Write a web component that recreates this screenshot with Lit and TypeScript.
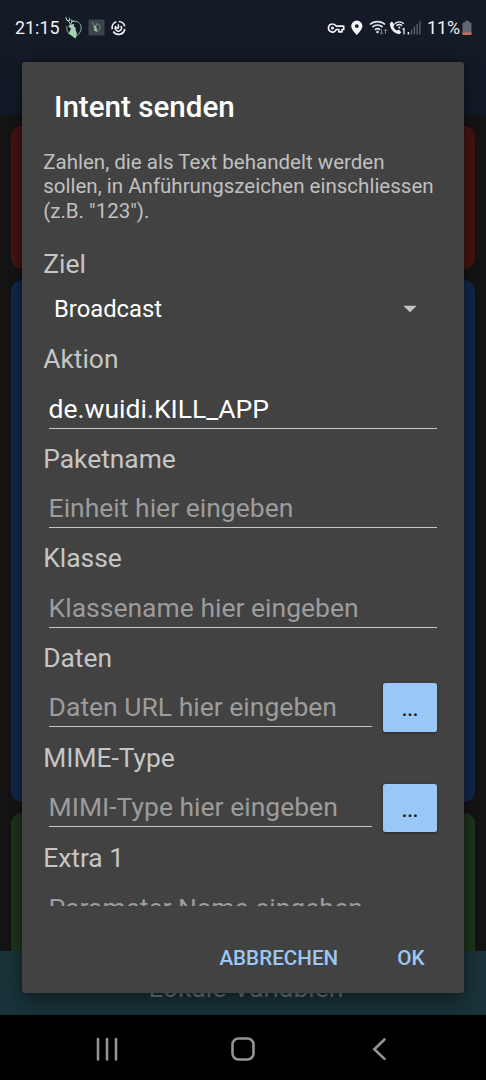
import { LitElement, html, css, nothing } from "lit";
import { customElement, property } from "lit/decorators.js";

@customElement("status-bar")
class StatusBar extends LitElement {
  static styles = css`
    :host {
      display: flex;
      align-items: center;
      height: 55px;
      box-sizing: border-box;
      padding: 0 14px 0 15px;
      color: #f1f2f4;
      font-size: 17.9px;
    }
    .spacer { flex: 1; }
    svg { display: block; flex: none; }
    .clock { width: 50px; white-space: nowrap; line-height: 24px; margin-top: 1px; }
    .app { margin-left: 5px; }
    .sync { margin-left: -1.500px; }
    .key { margin-right: 1px; }
    .battery { width: 35px; white-space: nowrap; line-height: 24px; margin-top: 1px; }
  `;
  render() {
    return html`
      <span class="clock">21:15</span>
      <svg width="18" height="24" viewBox="0 0 18 24">
        <path d="M7.500 5.800C12.500 4 16.200 7.500 16.200 12c0 4-3 6.500-6.200 9.800" fill="none" stroke="#8fb59b" stroke-width="1" />
        <path d="M1.900 10C1.300 13.500 2.600 16 4.200 18" fill="none" stroke="#8fb59b" stroke-width="1" />
        <path d="M.9 1l.8 3 2.300 1.600 1.600 3M1.600 4L4.500 4.800 4.300 1.800M5.600 8.600L6.800 5.700 6 3.400M6.800 5.700L9 4.300" fill="none" stroke="#a5ccb0" stroke-width="1" />
        <path d="M3.600 9.200L7 8.300l2.200-.4-.3 2 2 2.600-.3 1.800 1.500 3.500-1.700 4.800-6.800-5.200 1.900-3.600L6 12.500 3.800 11z" fill="#a8d0b3" />
      </svg>
      <svg class="app" width="17" height="17" viewBox="0 0 17 17">
        <rect x=".5" y=".5" width="16" height="16" rx="1" fill="#3d4447" />
        <path d="M8 5c3-.6 4.500 1.500 4 4-.4 1.700-1.700 2.600-3 4" fill="none" stroke="#7d9d84" stroke-width=".8" />
        <path d="M4.500 3.500l1.300 2.200 1.200 1.500M7.500 7l1-1.500" fill="none" stroke="#8db697" stroke-width=".8" />
        <path d="M5 7.300h3.500l-.3 1.500 1 1.600L8.600 13 6 11.300l.6-2z" fill="#95c2a1" />
      </svg>
      <svg class="sync" width="30" height="16" viewBox="0 0 30 16">
        <g fill="none" stroke="#eef0f3" stroke-width="1.700">
          <path d="M14.800 1.500A6.300 6.300 0 0 1 20.700 6.200M20.800 9A6.300 6.300 0 0 1 9.300 11.500M8.300 9.200A6.300 6.300 0 0 1 12.300 1.800" />
          <path d="M12 6A3.100 3.100 0 1 0 16.800 6M14.400 4.200V8H11.800" stroke-width="1.500" />
        </g>
      </svg>
      <span class="spacer"></span>
      <svg class="key" width="19" height="14" viewBox="0 0 19 14">
        <path d="M5.500 3a4 4 0 1 0 3.700 5.500h2.600v2.300h3.200V8.500h1.700V5.200H9.200A4 4 0 0 0 5.500 3z" fill="none" stroke="#eef0f3" stroke-width="1.700" stroke-linejoin="round" />
        <circle cx="5.500" cy="7" r="1.500" fill="#eef0f3" />
      </svg>
      <svg width="22" height="16" viewBox="0 0 22 16">
        <path fill-rule="evenodd" d="M9.800.500a5.600 5.600 0 0 0-5.600 5.600c0 3.800 5.600 8.900 5.600 8.900s5.600-5.100 5.600-8.900A5.600 5.600 0 0 0 9.800.500zm0 3.700a1.900 1.900 0 1 1 0 3.800 1.900 1.900 0 0 1 0-3.800z" fill="#f3f4f6" />
      </svg>
      <svg width="20" height="16" viewBox="0 0 20 16">
        <g fill="none" stroke="#dfe2e6" stroke-width="1.600">
          <path d="M.9 4.500C5 .6 12 .6 16.100 4.500" /><path d="M3.400 7.200c3-2.800 7.200-2.800 10.200 0" /><path d="M5.900 9.800c1.500-1.300 3.700-1.300 5.200 0" />
        </g>
        <circle cx="8.500" cy="12" r="1.300" fill="#dfe2e6" />
        <path d="M12.500 9v5M11 12.500l1.500 1.700 1.500-1.700M16.500 14V9.200M15 10.800l1.500-1.700 1.500 1.700" fill="none" stroke="#777d87" stroke-width="1" />
      </svg>
      <svg width="18" height="16" viewBox="0 0 18 16">
        <path d="M2.900 1.500L.9 3.200C.6 8.500 5 13.500 10.300 14.300l2-1.800-2.300-3-2.100 1C6 9.500 5 8 4.300 6.500L5.700 4.800z" fill="#eef0f3" />
        <g fill="none" stroke="#eef0f3" stroke-width="1.300">
          <path d="M5.800 3.800c2.600-2.500 6.400-2.500 9 0M7.400 5.800c1.700-1.500 4-1.500 5.700 0" />
        </g>
        <circle cx="10.300" cy="7.500" r="1.100" fill="#eef0f3" />
        <path d="M13.500 9.500l1.500-.9v6" fill="none" stroke="#eef0f3" stroke-width="1.200" />
      </svg>
      <svg width="20" height="16" viewBox="0 0 20 16">
        <path d="M1.400 12v2.500" stroke="#eef0f3" stroke-width="1.600" />
        <path d="M4.600 9.500v5M7.400 6.500v8M10.200 4v10.500M12.900 1.500v13" stroke="#5a606b" stroke-width="1.400" />
      </svg>
      <span class="battery">11%</span>
      <svg width="10" height="16" viewBox="0 0 10 16">
        <path d="M3 .8h4v1.700h1.500q1 0 1 1V14q0 1-1 1h-7q-1 0-1-1V3.500q0-1 1-1H3z" fill="#616872" />
        <path d="M.5 12.600h9V14q0 1-1 1h-7q-1 0-1-1z" fill="#c8705a" />
      </svg>
    `;
  }
}

@customElement("form-field")
class FormField extends LitElement {
  @property() label = "";
  @property() value = "";
  @property() placeholder = "";
  @property({ type: Boolean }) picker = false;

  static styles = css`
    :host { display: block; height: 99.4px; }
    :host([picker]) { height: 100.4px; }
    .label {
      height: 32px;
      line-height: 32px;
      font-size: 26.400px;
      color: #c6c6c6;
    }
    .row { display: flex; align-items: flex-start; padding-left: 5.400px; }
    .input {
      flex: 1;
      box-sizing: border-box;
      height: 43px;
      margin-top: 10.400px;
      line-height: 45px;
      font-size: 26.500px;
      color: #fff;
      white-space: nowrap;
      border-bottom: 1.500px solid #c6c6c6;
    }
    .hint { color: #9c9c9c; }
    .pick {
      width: 54px;
      height: 48.500px;
      margin: 9.600px 0 0 11px;
      border-radius: 2.500px;
      background: #9ac7f6;
      box-shadow: 0 1px 3px #0006;
      color: #111a26;
      font-size: 20px;
      font-weight: 500;
      line-height: 53px;
      text-align: center;
    }
  `;
  render() {
    return html`
      <div class="label">${this.label}</div>
      <div class="row">
        <div class="input ${this.value ? "" : "hint"}">${this.value || this.placeholder}</div>
        ${this.picker ? html`<div class="pick">...</div>` : nothing}
      </div>
    `;
  }
}

@customElement("app-root")
class AppRoot extends LitElement {
  static styles = css`
    :host {
      display: block;
      position: relative;
      height: 1080px;
      overflow: hidden;
      background: #141414;
      font-family: Roboto, "Noto Sans", sans-serif;
    }
    .screen { display: flex; flex-direction: column; height: 1080px; }
    .header { height: 115px; background: linear-gradient(#141a26 45%, #121a2a); }
    .cards { flex: 1; display: flex; flex-direction: column; gap: 11px; padding: 11px 11px 0; overflow: hidden; }
    .card { border-radius: 11px; }
    .red { height: 143px; background: #451411; }
    .blue { height: 522px; background: #11284a; }
    .green { flex: 1; background: #1d351c; border-radius: 11px 11px 0 0; }
    .locals {
      height: 64px;
      background: #19343b;
      color: #6f7b7e;
      font-size: 26.500px;
      line-height: 73px;
      text-align: center;
      padding-left: 6px;
    }
    .nav { display: flex; align-items: center; height: 65px; background: #000; }
    .nav svg { display: block; }
    .dialog {
      position: absolute;
      left: 22px;
      top: 62px;
      width: 442px;
      height: 931px;
      box-sizing: border-box;
      border-radius: 3px;
      background: #424242;
      box-shadow: 0 10px 24px #0006, 0 0 5px #0004;
      display: flex;
      flex-direction: column;
    }
    .title { padding: 27px 0 0 32px; font-size: 29.600px; font-weight: 500; line-height: 36px; color: #fff; }
    .body { height: 781px; overflow: hidden; padding: 25px 27px 0 21.200px; box-sizing: border-box; }
    .note { font-size: 20.530px; line-height: 24.400px; color: #c0c0c0; white-space: nowrap; }
    .target { margin-top: 24.800px; font-size: 26.400px; line-height: 32px; color: #c6c6c6; }
    .select {
      display: flex;
      align-items: center;
      justify-content: space-between;
      height: 63.400px;
      box-sizing: border-box;
      padding: 0 20px 6px 10.800px;
      font-size: 23.800px;
      color: #fff;
    }
    .actions {
      display: flex;
      justify-content: flex-end;
      gap: 59px;
      padding: 36px 39.500px 0 0;
      font-size: 20.650px;
      font-weight: 500;
      line-height: 32px;
      color: #9ac7f6;
    }
  `;
  render() {
    return html`
      <div class="screen">
        <div class="header"><status-bar></status-bar></div>
        <div class="cards">
          <div class="card red"></div>
          <div class="card blue"></div>
          <div class="card green"></div>
        </div>
        <div class="locals">Lokale Variablen</div>
        <div class="nav">
          <svg width="486" height="65" viewBox="0 0 486 65" fill="none" stroke="#949494" stroke-width="2.600">
            <path d="M98 24v20.500M107 24v20.500M116 24v20.500" stroke-linecap="round" />
            <rect x="232.500" y="23.500" width="21" height="21" rx="6" />
            <path d="M384.500 24.500l-10.200 9.700 10.200 9.700" stroke-linecap="round" />
          </svg>
        </div>
      </div>
      <div class="dialog">
        <div class="title">Intent senden</div>
        <div class="body">
          <div class="note">
            Zahlen, die als Text behandelt werden<br />sollen, in Anführungszeichen einschliessen<br />(z.B. "123").
          </div>
          <div class="target">Ziel</div>
          <div class="select">
            <span>Broadcast</span>
            <svg width="14" height="8" viewBox="0 0 14 8"><path d="M.3.700h13.400L7 7.300z" fill="#c6c6c6" /></svg>
          </div>
          <form-field label="Aktion" value="de.wuidi.KILL_APP"></form-field>
          <form-field label="Paketname" placeholder="Einheit hier eingeben"></form-field>
          <form-field label="Klasse" placeholder="Klassename hier eingeben"></form-field>
          <form-field label="Daten" placeholder="Daten URL hier eingeben" picker></form-field>
          <form-field label="MIME-Type" placeholder="MIMI-Type hier eingeben" picker></form-field>
          <form-field label="Extra 1" placeholder="Parameter Name eingeben"></form-field>
        </div>
        <div class="actions"><span>ABBRECHEN</span><span>OK</span></div>
      </div>
    `;
  }
}
